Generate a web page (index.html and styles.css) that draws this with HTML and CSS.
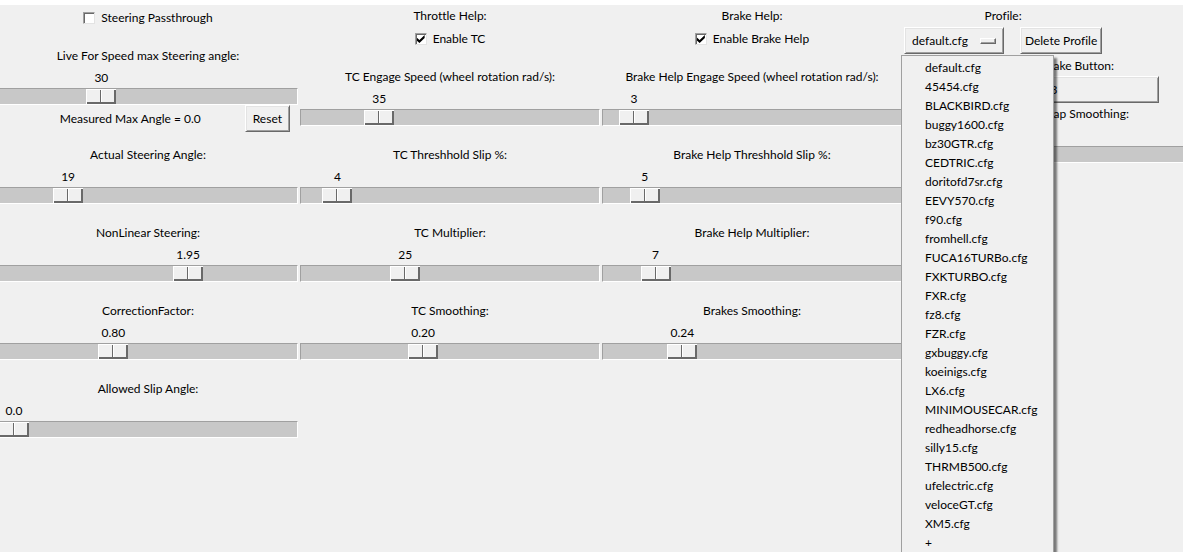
FILE: index.html
```html
<!DOCTYPE html>
<html lang="en">
<head>
<meta charset="utf-8">
<title>Steering settings</title>
<link rel="stylesheet" href="styles.css">
</head>
<body>
<main class="panel">
  <section class="column column-steering">
    <label class="check"><input type="checkbox"> Steering Passthrough</label>
    <div class="scale" style="--pos:.326"><label for="s1">Live For Speed max Steering angle:</label><output for="s1">30</output><input id="s1" type="range" min="0" max="92" step="any" value="30"></div>
    <div class="measured"><span>Measured Max Angle = 0.0</span><button class="btn" type="button">Reset</button></div>
    <div class="scale" style="--pos:.202"><label for="s2">Actual Steering Angle:</label><output for="s2">19</output><input id="s2" type="range" min="0" max="94" step="any" value="19"></div>
    <div class="scale" style="--pos:.65"><label for="s3">NonLinear Steering:</label><output for="s3">1.95</output><input id="s3" type="range" min="0" max="3" step="any" value="1.95"></div>
    <div class="scale" style="--pos:.371"><label for="s4">CorrectionFactor:</label><output for="s4">0.80</output><input id="s4" type="range" min="0" max="2.16" step="any" value="0.80"></div>
    <div class="scale" style="--pos:0"><label for="s5">Allowed Slip Angle:</label><output for="s5">0.0</output><input id="s5" type="range" min="0" max="10" step="any" value="0"></div>
  </section>

  <section class="column">
    <h2 class="heading">Throttle Help:</h2>
    <label class="check"><input type="checkbox" checked> Enable TC</label>
    <div class="scale" style="--pos:.236"><label for="t1">TC Engage Speed (wheel rotation rad/s):</label><output for="t1">35</output><input id="t1" type="range" min="0" max="148" step="any" value="35"></div>
    <div class="scale" style="--pos:.08"><label for="t2">TC Threshhold Slip %:</label><output for="t2">4</output><input id="t2" type="range" min="0" max="50" step="any" value="4"></div>
    <div class="scale" style="--pos:.333"><label for="t3">TC Multiplier:</label><output for="t3">25</output><input id="t3" type="range" min="0" max="75" step="any" value="25"></div>
    <div class="scale" style="--pos:.4"><label for="t4">TC Smoothing:</label><output for="t4">0.20</output><input id="t4" type="range" min="0" max="0.5" step="any" value="0.20"></div>
  </section>

  <section class="column">
    <h2 class="heading">Brake Help:</h2>
    <label class="check"><input type="checkbox" checked> Enable Brake Help</label>
    <div class="scale" style="--pos:.06"><label for="b1">Brake Help Engage Speed (wheel rotation rad/s):</label><output for="b1">3</output><input id="b1" type="range" min="0" max="50" step="any" value="3"></div>
    <div class="scale" style="--pos:.1"><label for="b2">Brake Help Threshhold Slip %:</label><output for="b2">5</output><input id="b2" type="range" min="0" max="50" step="any" value="5"></div>
    <div class="scale" style="--pos:.14"><label for="b3">Brake Help Multiplier:</label><output for="b3">7</output><input id="b3" type="range" min="0" max="50" step="any" value="7"></div>
    <div class="scale" style="--pos:.24"><label for="b4">Brakes Smoothing:</label><output for="b4">0.24</output><input id="b4" type="range" min="0" max="1" step="any" value="0.24"></div>
  </section>

  <section class="column">
    <div class="profile">
      <h2 class="heading">Profile:</h2>
      <div class="profile-row">
        <button class="btn option" type="button" aria-haspopup="menu" aria-expanded="true">default.cfg<span class="indicator"></span></button>
        <button class="btn btn-tight" type="button">Delete Profile</button>
      </div>
      <div class="menu" role="menu">
        <button type="button" role="menuitem">default.cfg</button>
        <button type="button" role="menuitem">45454.cfg</button>
        <button type="button" role="menuitem">BLACKBIRD.cfg</button>
        <button type="button" role="menuitem">buggy1600.cfg</button>
        <button type="button" role="menuitem">bz30GTR.cfg</button>
        <button type="button" role="menuitem">CEDTRIC.cfg</button>
        <button type="button" role="menuitem">doritofd7sr.cfg</button>
        <button type="button" role="menuitem">EEVY570.cfg</button>
        <button type="button" role="menuitem">f90.cfg</button>
        <button type="button" role="menuitem">fromhell.cfg</button>
        <button type="button" role="menuitem">FUCA16TURBo.cfg</button>
        <button type="button" role="menuitem">FXKTURBO.cfg</button>
        <button type="button" role="menuitem">FXR.cfg</button>
        <button type="button" role="menuitem">fz8.cfg</button>
        <button type="button" role="menuitem">FZR.cfg</button>
        <button type="button" role="menuitem">gxbuggy.cfg</button>
        <button type="button" role="menuitem">koeinigs.cfg</button>
        <button type="button" role="menuitem">LX6.cfg</button>
        <button type="button" role="menuitem">MINIMOUSECAR.cfg</button>
        <button type="button" role="menuitem">redheadhorse.cfg</button>
        <button type="button" role="menuitem">silly15.cfg</button>
        <button type="button" role="menuitem">THRMB500.cfg</button>
        <button type="button" role="menuitem">ufelectric.cfg</button>
        <button type="button" role="menuitem">veloceGT.cfg</button>
        <button type="button" role="menuitem">XM5.cfg</button>
        <button type="button" role="menuitem">+</button>
      </div>
    </div>
    <label class="caption" for="brake-key">Set Handbrake Button:</label>
    <button class="btn key" id="brake-key" type="button">3</button>
    <div class="scale scale-gap" style="--pos:.1"><label for="g1">Throttle Overlap Smoothing:</label><output for="g1"></output><input id="g1" type="range" min="0" max="1" step="any" value="0.1"></div>
  </section>
</main>
</body>
</html>
```
FILE: styles.css
```css
* { box-sizing: border-box; }

body {
  margin: 0;
  height: 100vh;
  overflow: hidden;
  background: #f0f0f0;
  border-top: 5px solid #fff;
  color: #000;
  font: 12px/20px "Segoe UI", Lato, "Open Sans", sans-serif;
  font-variant-ligatures: none;
}

button, input { font: inherit; font-variant-ligatures: none; color: inherit; margin: 0; }

/* The grid runs slightly past both window edges. */
.panel {
  display: grid;
  grid-template-columns: repeat(4, minmax(0, 1fr));
  gap: 2px;
  margin: 0 -21px 0 -2px;
}

.column { display: flex; flex-direction: column; }
.column-steering { padding-top: 1px; }

.heading {
  margin: 0;
  font-size: inherit;
  font-weight: normal;
  line-height: 22px;
  text-align: center;
}

.check {
  display: flex;
  align-items: center;
  justify-content: center;
  gap: 6px;
  height: 24px;
}

.check input {
  appearance: none;
  display: grid;
  place-items: center;
  width: 12px;
  height: 12px;
  background: #fff;
  border: 1px solid;
  border-color: #a0a0a0 #e3e3e3 #e3e3e3 #a0a0a0;
  box-shadow: inset 1px 1px #696969;
}

.check input:checked::before {
  content: "";
  width: 8px;
  height: 8px;
  background: #000;
  clip-path: polygon(0 30%, 35% 62%, 100% 0, 100% 36%, 35% 100%, 0 68%);
}

.scale { display: flex; flex-direction: column; margin-top: 19px; }
.check + .scale { margin-top: 16px; }
.measured + .scale { margin-top: 13px; }
.scale.scale-gap { margin-top: 1px; }
.scale label { text-align: center; }

.scale output {
  display: flex;
  justify-content: center;
  width: 30px;
  height: 22px;
  padding-top: 2px;
  margin-left: calc((100% - 32px) * var(--pos) + 1px);
}

.scale input {
  appearance: none;
  width: 100%;
  height: 17px;
  background: #c8c8c8;
  border: 1px solid;
  border-color: #a0a0a0 #fff #fff #a0a0a0;
}

.scale input::-webkit-slider-thumb {
  appearance: none;
  width: 30px;
  height: 15px;
  border: 0;
  background: linear-gradient(90deg, transparent 14px, #696969 14px 15px, #fff 15px 16px, transparent 16px) #f0f0f0;
  box-shadow: inset 1px 1px #fff, inset -2px -2px #696969;
}

.scale input::-moz-range-thumb {
  width: 30px;
  height: 15px;
  border: 0;
  border-radius: 0;
  background: #f0f0f0;
  box-shadow: inset 1px 1px #fff, inset -2px -2px #696969;
}

.measured {
  display: flex;
  align-items: center;
  justify-content: flex-end;
  gap: 44px;
  padding-right: 8px;
}

.btn {
  height: 27px;
  padding: 0 7px;
  background: #f0f0f0;
  border: 1px solid;
  border-color: #fff #696969 #696969 #fff;
  box-shadow: inset 1px 1px #e3e3e3, inset -1px -1px #a0a0a0;
  line-height: 20px;
  white-space: nowrap;
}

.btn-tight { padding: 0 4px; }

.profile { position: relative; width: fit-content; }
.profile-row { display: flex; gap: 16px; }

.option { display: flex; align-items: center; gap: 12px; }

.indicator {
  width: 16px;
  height: 6px;
  border: 1px solid;
  border-color: #fff #696969 #696969 #fff;
  box-shadow: inset -1px -1px #a0a0a0;
}

.menu {
  position: absolute;
  top: 50px;
  left: -3px;
  z-index: 1;
  display: flex;
  flex-direction: column;
  width: 153px;
  padding: 2px;
  background: #f0f0f0;
  border: 1px solid #a0a0a0;
  box-shadow: 3px 3px 2px rgba(0, 0, 0, .5);
}

.menu button {
  height: 19px;
  padding: 0 0 0 21px;
  border: 0;
  background: none;
  line-height: 19px;
  text-align: left;
}

.caption { margin-top: 2px; text-align: center; }
.key { width: 70%; align-self: center; }
```
